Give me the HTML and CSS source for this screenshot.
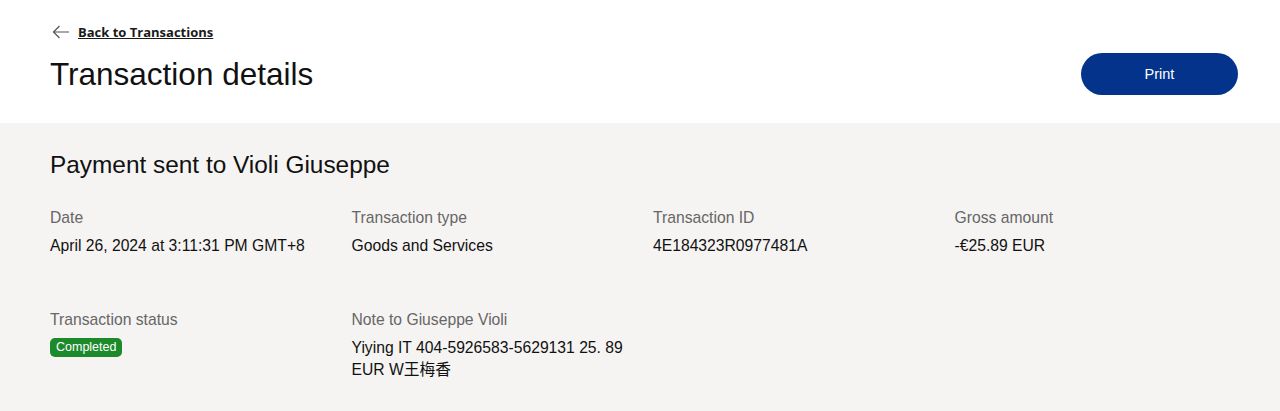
FILE: index.html
```html
<!DOCTYPE html>
<html>
<head>
  <title>Transaction details</title>
  <link rel="stylesheet" href="styles.css">
</head>
<body>
  <div class="page-header">
    <div class="header-left">
      <a class="back-link" href="#">
        <svg class="back-arrow" width="18" height="14" viewBox="0 0 18 14">
          <path d="M17 7H1.5M7.5 1L1.5 7l6 6" fill="none" stroke="#555" stroke-width="1.2"/>
        </svg>
        <span>Back to Transactions</span>
      </a>
      <h1>Transaction details</h1>
    </div>
    <button class="print-button">Print</button>
  </div>

  <div class="details">
    <h2>Payment sent to Violi Giuseppe</h2>
    <div class="detail-grid">
      <div class="field">
        <div class="label">Date</div>
        <div class="value">April 26, 2024 at 3:11:31 PM GMT+8</div>
      </div>
      <div class="field">
        <div class="label">Transaction type</div>
        <div class="value">Goods and Services</div>
      </div>
      <div class="field">
        <div class="label">Transaction ID</div>
        <div class="value">4E184323R0977481A</div>
      </div>
      <div class="field">
        <div class="label">Gross amount</div>
        <div class="value">-€25.89 EUR</div>
      </div>
      <div class="field">
        <div class="label">Transaction status</div>
        <div class="value"><span class="badge">Completed</span></div>
      </div>
      <div class="field">
        <div class="label">Note to Giuseppe Violi</div>
        <div class="value note">Yiying IT 404-5926583-5629131 25. 89 EUR W王梅香</div>
      </div>
    </div>
  </div>
</body>
</html>
```

FILE: styles.css
```css
* {
  box-sizing: border-box;
  margin: 0;
  padding: 0;
}

body {
  font-family: "Liberation Sans", Arial, "Noto Sans CJK SC", sans-serif;
  background-color: #f5f4f2;
  color: #111;
}

.page-header {
  display: flex;
  justify-content: space-between;
  align-items: flex-start;
  background-color: #fff;
  height: 123px;
  padding: 22px 42px 0 50px;
}

.back-link {
  display: flex;
  align-items: center;
  gap: 8px;
  color: #1a1a1a;
  font-family: "Open Sans", sans-serif;
  font-weight: 700;
  font-size: 13px;
  text-decoration: underline;
  height: 20px;
}

.back-arrow {
  margin-left: 2px;
}

h1 {
  font-weight: 400;
  font-size: 31.5px;
  margin-top: 14px;
  color: #111;
}

.print-button {
  margin-top: 31px;
  width: 157px;
  height: 42px;
  border: none;
  border-radius: 21px;
  background-color: #04338b;
  color: #fff;
  font-family: inherit;
  font-size: 14.5px;
  cursor: pointer;
}

.details {
  padding: 28px 24px 0 50px;
}

h2 {
  font-weight: 400;
  font-size: 24.4px;
  color: #111;
}

.detail-grid {
  display: grid;
  grid-template-columns: repeat(4, 1fr);
  row-gap: 53px;
  margin-top: 29px;
}

.label {
  font-size: 15.7px;
  color: #666;
  line-height: 20px;
}

.value {
  font-size: 15.7px;
  color: #111;
  line-height: 22px;
  margin-top: 7px;
}

.note {
  max-width: 290px;
}

.badge {
  display: inline-block;
  background-color: #1c8a2a;
  color: #fff;
  font-size: 12.5px;
  line-height: 19px;
  padding: 0 6px;
  border-radius: 5px;
  vertical-align: top;
  margin-top: 1px;
}
```
